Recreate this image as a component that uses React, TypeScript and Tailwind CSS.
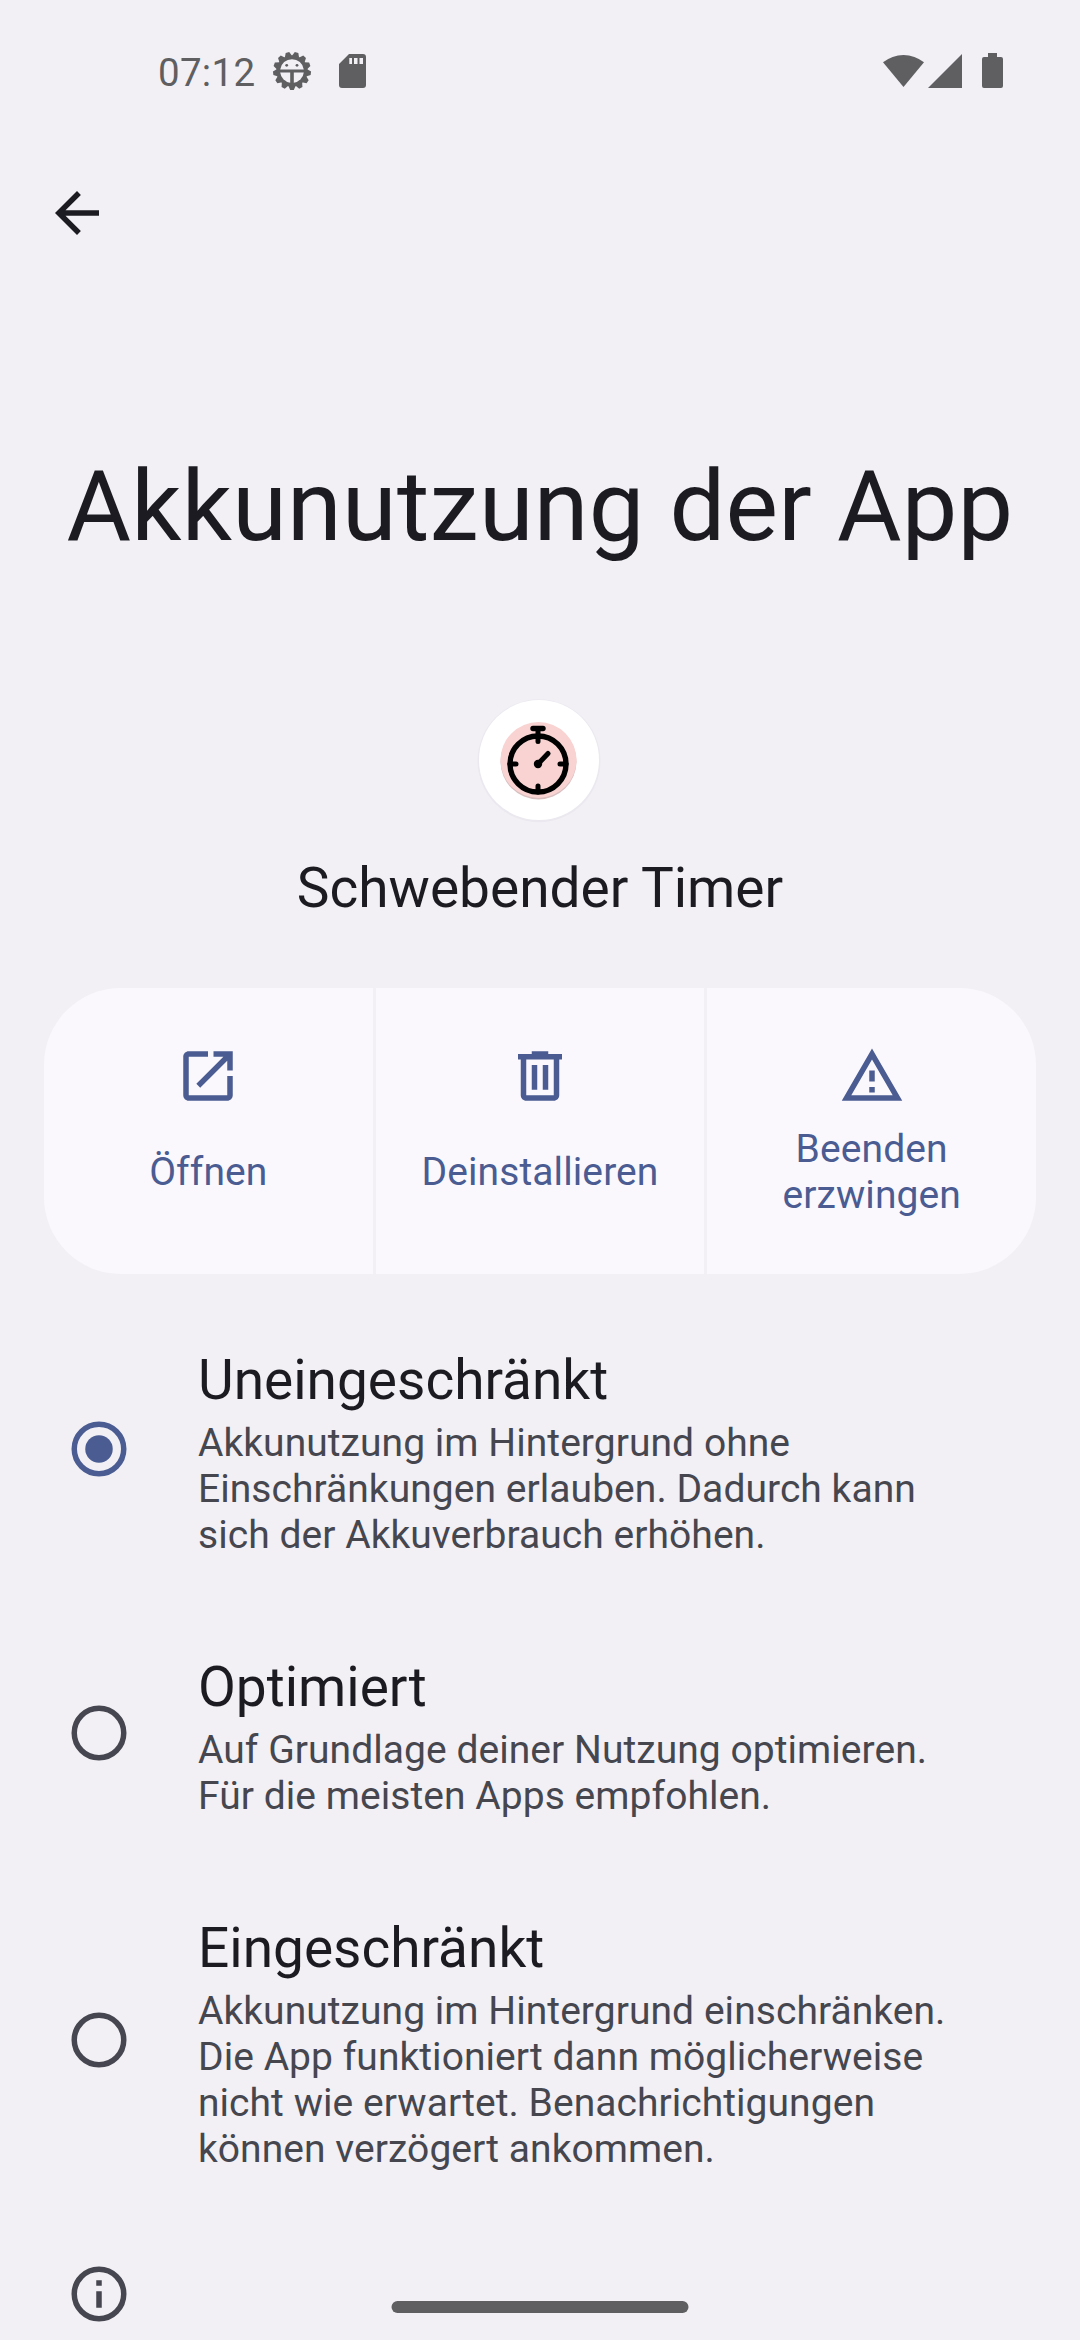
import React from "react";

function Svg({ className, children }: { className?: string; children: React.ReactNode }) {
  return (
    <svg viewBox="0 0 24 24" fill="currentColor" className={"block size-[66px] shrink-0 " + (className ?? "")}>
      {children}
    </svg>
  );
}

function OpenIcon() {
  return (
    <Svg>
      <path d="M19 21H5c-1.100 0-2-.9-2-2V5c0-1.100.9-2 2-2h7v2H5v14h14v-7h2v7c0 1.100-.9 2-2 2z" />
      <path d="M14 3v2h3.590l-9.830 9.830 1.410 1.410L19 6.410V10h2V3z" />
    </Svg>
  );
}

function DeleteIcon() {
  return (
    <Svg>
      <path
        fillRule="evenodd"
        d="M15 4V3H9v1H4v2h1v13c0 1.100.9 2 2 2h10c1.100 0 2-.9 2-2V6h1V4h-5zm2 15H7V6h10v13zM9 8h2v9H9V8zm4 0h2v9h-2V8z"
      />
    </Svg>
  );
}

function WarnIcon() {
  return (
    <Svg>
      <path d="M12 5.990L19.530 19H4.470L12 5.990M12 2L1 21h22L12 2z" />
      <path d="M11 16h2v2h-2zM11 10h2v4h-2z" />
    </Svg>
  );
}

const teeth = Array.from({ length: 13 }, (_, i) => 180 + (i * 360) / 13);

function GearIcon() {
  return (
    <svg viewBox="-20 -20 40 40" className="size-10 shrink-0">
      <g fill="#5f5f62">
        {teeth.map((a) => (
          <path key={a} d="M-3.800 -14.500L-1.800 -19H1.800L3.800 -14.500Z" transform={`rotate(${a})`} />
        ))}
        <circle r="15.500" />
      </g>
      <g fill="#f2f0f5">
        <path d="M-11.800 -1.500A11.900 11.900 0 0 1 11.800 -1.500Z" />
        <path d="M-11.800 1.500H-1.800V11.800A11.900 11.900 0 0 1 -11.800 1.500Z" />
        <path d="M11.800 1.500H1.800V11.800A11.900 11.900 0 0 0 11.800 1.500Z" />
      </g>
      <circle cx="-5.300" cy="-5.700" r="1.400" fill="#5f5f62" />
      <circle cx="5" cy="-5.700" r="1.400" fill="#5f5f62" />
    </svg>
  );
}

function StatusBar() {
  return (
    <header className="flex h-[142px] items-start pl-[158px] text-[#5f5f62]">
      <span className="mt-[50px] w-[114px] text-[38.5px] leading-[46px] tracking-[0.3px]">07:12</span>
      <div className="mt-[51px]">
        <GearIcon />
      </div>
      <svg viewBox="0 0 27 34" fill="currentColor" className="mt-[54px] ml-[27px] h-[34px] w-[27px]">
        <path
          fillRule="evenodd"
          d="M10 0H24a3 3 0 0 1 3 3V31a3 3 0 0 1-3 3H3a3 3 0 0 1-3-3V10ZM10.300 4V10H13V4ZM15 4V10H18.500V4ZM20.500 4V10H24V4Z"
        />
      </svg>
      <svg viewBox="0 0 41 34" fill="currentColor" className="mt-[53px] ml-[517px] h-[34px] w-[41px]">
        <path d="M20.500 34L0 9.300A32.500 32.500 0 0 1 41 9.300Z" />
      </svg>
      <svg viewBox="0 0 34 34" fill="currentColor" className="mt-[53.5px] ml-1 size-[34px]">
        <path d="M34 0V34H0Z" />
      </svg>
      <svg viewBox="0 0 21 35" fill="currentColor" className="mt-[53px] ml-5 h-[35px] w-[21px]">
        <path d="M6 0H15V4H19a2 2 0 0 1 2 2V33a2 2 0 0 1-2 2H2a2 2 0 0 1-2-2V6a2 2 0 0 1 2-2H6Z" />
      </svg>
    </header>
  );
}

function AppIcon() {
  return (
    <svg viewBox="-60 -60 120 120" className="size-[120px] overflow-visible" fill="none">
      <circle r="61.500" cy="0.800" fill="#ebe9ef" />
      <circle r="60" fill="#fff" />
      <circle cx="-0.500" cy="1.500" r="38" fill="#d9bfc0" />
      <circle cx="-0.500" r="38" fill="#f8d3d2" />
      <g stroke="#000" strokeLinecap="round">
        <circle cx="-1" cy="4" r="28" strokeWidth="5.400" />
        <path d="M-6 -31.500H4" strokeWidth="5.400" />
        <path d="M-1 -31V-18.500M-1 26V32M-29 4H-23M27 4H21" strokeWidth="5" />
        <path d="M-1 4L9 -6.500" strokeWidth="5" />
      </g>
      <circle cx="-1" cy="4" r="4.200" fill="#000" />
    </svg>
  );
}

function Action({ icon, label, className }: { icon: React.ReactNode; label: React.ReactNode; className?: string }) {
  return (
    <button className={"flex flex-1 flex-col items-center bg-[#faf8fd] pt-[55px] text-[#4a5c92] " + (className ?? "")}>
      {icon}
      <span className="mt-[17px] flex h-[92px] items-center text-center text-[39px] leading-[46px] tracking-[0.1px]">
        {label}
      </span>
    </button>
  );
}

type OptionProps = { title: string; lines: string[]; checked?: boolean; className: string };

function Option({ title, lines, checked, className }: OptionProps) {
  return (
    <div className={"flex pl-[66px] " + className}>
      <Svg className={"self-center " + (checked ? "text-[#4a5c92]" : "text-[#45464f]")}>
        <circle cx="12" cy="12" r="9" fill="none" stroke="currentColor" strokeWidth="2" />
        {checked && <circle cx="12" cy="12" r="5" />}
      </Svg>
      <div className="ml-[66px] pt-[53px]">
        <h2 className="text-[55px] leading-[64px] text-[#1b1b21]">{title}</h2>
        <p className="mt-2 text-[39px] leading-[46px] tracking-[0.05px] whitespace-nowrap text-[#46464f]">
          {lines.map((l) => (
            <span key={l} className="block">
              {l}
            </span>
          ))}
        </p>
      </div>
    </div>
  );
}

export default function App() {
  return (
    <div className="relative flex h-[2340px] w-[1080px] flex-col overflow-hidden bg-[#f2f0f5] font-['Roboto',sans-serif] text-[#1b1b21]">
      <StatusBar />
      <nav className="mt-[38px] pl-11">
        <Svg>
          <path d="M20 11H7.830l5.590-5.590L12 4l-8 8 8 8 1.410-1.410L7.830 13H20v-2z" />
        </Svg>
      </nav>
      <h1 className="mt-[202px] text-center text-[99px] leading-[116px] tracking-[0.27px] whitespace-nowrap">
        Akkunutzung der App
      </h1>
      <div className="mt-[136px] flex justify-center pr-[2px]">
        <AppIcon />
      </div>
      <div className="mt-[36px] text-center text-[55px] leading-[64px]">Schwebender Timer</div>
      <div className="mx-11 mt-[68px] flex h-[286px] shrink-0 gap-[3px]">
        <Action className="rounded-l-[77px]" icon={<OpenIcon />} label="Öffnen" />
        <Action icon={<DeleteIcon />} label="Deinstallieren" />
        <Action
          className="rounded-r-[77px]"
          icon={<WarnIcon />}
          label={
            <>
              Beenden
              <br />
              erzwingen
            </>
          }
        />
      </div>
      <main className="mt-[21px]">
        <Option
          className="h-[307px]"
          checked
          title="Uneingeschränkt"
          lines={["Akkunutzung im Hintergrund ohne", "Einschränkungen erlauben. Dadurch kann", "sich der Akkuverbrauch erhöhen."]}
        />
        <Option
          className="h-[261px]"
          title="Optimiert"
          lines={["Auf Grundlage deiner Nutzung optimieren.", "Für die meisten Apps empfohlen."]}
        />
        <Option
          className="h-[353px]"
          title="Eingeschränkt"
          lines={[
            "Akkunutzung im Hintergrund einschränken.",
            "Die App funktioniert dann möglicherweise",
            "nicht wie erwartet. Benachrichtigungen",
            "können verzögert ankommen.",
          ]}
        />
        <div className="mt-[45px] pl-[66px] text-[#45464f]">
          <Svg>
            <circle cx="12" cy="12" r="9" fill="none" stroke="currentColor" strokeWidth="2" />
            <path d="M11 7h2v2h-2zM11 11h2v6h-2z" />
          </Svg>
        </div>
      </main>
      <div className="absolute bottom-[27px] left-1/2 h-[12px] w-[297px] -translate-x-1/2 rounded-full bg-[#5f5f62]" />
    </div>
  );
}
